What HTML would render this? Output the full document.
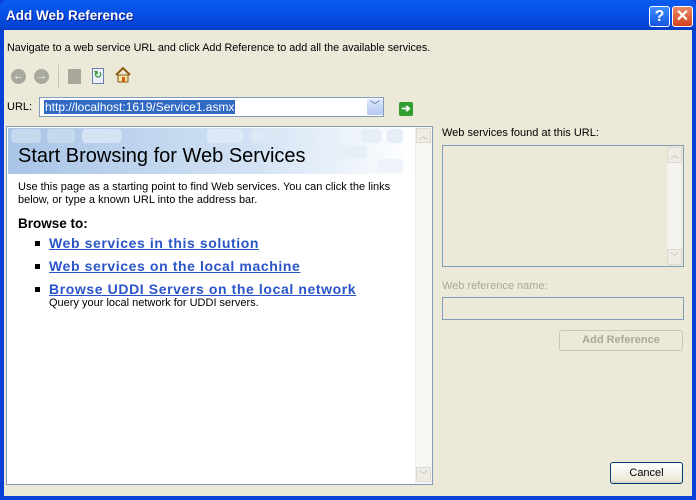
<!DOCTYPE html>
<html><head><style>
*{margin:0;padding:0;box-sizing:border-box}
body{width:696px;height:500px;overflow:hidden;background:#0a3fd8;font-family:"Liberation Sans",sans-serif;font-size:11px;position:relative}
.t{position:absolute}
#title{left:0;top:0;width:696px;height:31px;background:linear-gradient(#0a5cf0,#0750e6 40%,#0444d4 85%,#0538c0);border-radius:7px 7px 0 0}
#body{left:4px;top:30px;width:688px;height:466px;background:#ece9d8}
.btn{border:1px solid #003c74;border-radius:3px;background:linear-gradient(#fff,#ece9d8 85%,#d6d0c0);text-align:center}
.link{color:#2a55c8;font-weight:bold;text-decoration:underline;font-size:14px;letter-spacing:0.6px}
.sq{width:5px;height:5px;background:#000}
.pill{position:absolute;height:14px;border-radius:4px;background:#c6d8ee}
</style></head><body>
<div id="title" class="t"></div>
<div class="t" style="left:6px;top:8px;color:#fff;font-weight:bold;font-size:13.5px;text-shadow:1px 1px #0a1e8a">Add Web Reference</div>
<div class="t" style="left:649px;top:6px;width:21px;height:21px;border:1px solid #fff;border-radius:3px;background:linear-gradient(#3d8cff,#1553e0);color:#fff;font-weight:bold;font-size:16px;text-align:center;line-height:19px">?</div>
<div class="t" style="left:672px;top:6px;width:21px;height:21px;border:1px solid #fff;border-radius:3px;background:linear-gradient(#ea8a6a,#d2431c);color:#fff;font-weight:bold;font-size:16px;text-align:center;line-height:19px">✕</div>
<div id="body" class="t"></div>
<div class="t" style="left:7px;top:42px;font-size:10.8px">Navigate to a web service URL and click Add Reference to add all the available services.</div>
<div class="t" style="left:11px;top:69px;width:15px;height:15px;border-radius:50%;background:#a8a89c;color:#fff;font-size:11px;text-align:center;line-height:15px;font-weight:bold">←</div>
<div class="t" style="left:34px;top:69px;width:15px;height:15px;border-radius:50%;background:#a8a89c;color:#fff;font-size:11px;text-align:center;line-height:15px;font-weight:bold">→</div>
<div class="t" style="left:58px;top:65px;width:1px;height:24px;background:#c8c4b4"></div>
<div class="t" style="left:68px;top:69px;width:13px;height:15px;background:#aaa69a"></div>
<div class="t" style="left:92px;top:68px;width:12px;height:16px;background:#eef;border:1px solid #6680b0;color:#2a9a2a;font-size:10px;line-height:14px;text-align:center;font-weight:bold">↻</div>
<svg class="t" style="left:115px;top:67px" width="16" height="16"><path d="M1 8 L8 1 L15 8" fill="none" stroke="#8a5a10" stroke-width="2"/><rect x="3" y="8" width="10" height="7" fill="#f4e4a8" stroke="#8a5a10"/><rect x="7" y="10" width="3" height="5" fill="#d06010"/></svg>
<div class="t" style="left:7px;top:101px">URL:</div>
<div class="t" style="left:39px;top:97px;width:345px;height:20px;background:#fff;border:1px solid #7f9db9"></div>
<div class="t" style="left:44px;top:100px;background:#316ac5;color:#fff;padding:0 1px;line-height:14px;font-size:12px">http://localhost:1619/Service1.asmx</div>
<div class="t" style="left:367px;top:99px;width:16px;height:16px;background:linear-gradient(#dde8ff,#b5c8f2);border-radius:2px;color:#4d6185;text-align:center;font-size:10px;line-height:16px">﹀</div>
<div class="t" style="left:399px;top:102px;width:14px;height:14px;background:#2f9e2f;border-radius:2px;color:#fff;font-size:11px;text-align:center;line-height:14px;font-weight:bold">➔</div>
<div class="t" style="left:6px;top:126px;width:427px;height:359px;border:1px solid #7f9db9;background:#fff;overflow:hidden">
 <div style="position:absolute;left:1px;top:1px;width:407px;height:46px;background:linear-gradient(90deg,#a8c4e6,#d2e2f4 60%,#fff)"></div>
 <div class="pill" style="left:4px;top:2px;width:30px"></div><div class="pill" style="left:40px;top:2px;width:28px"></div>
 <div class="pill" style="left:75px;top:2px;width:40px;background:#d4e2f2"></div><div class="pill" style="left:200px;top:2px;width:36px;background:#dce8f4"></div>
 <div class="pill" style="left:244px;top:2px;width:30px;background:#dce8f4"></div><div class="pill" style="left:310px;top:2px;width:22px;background:#e6eef8"></div>
 <div class="pill" style="left:354px;top:2px;width:20px;background:#e6eef8"></div><div class="pill" style="left:380px;top:2px;width:16px;background:#e6eef8"></div>
 <div class="pill" style="left:330px;top:18px;width:30px;background:#e6eef8"></div><div class="pill" style="left:370px;top:32px;width:26px;background:#eef4fa"></div>
 <div style="position:absolute;left:11px;top:18px;font-size:20px;color:#000">Start Browsing for Web Services</div>
 <div style="position:absolute;left:408px;top:0;width:17px;height:357px;background:#f6f6f2;border-left:1px solid #eee"></div>
 <div style="position:absolute;left:409px;top:1px;width:15px;height:15px;border:1px solid #dcdad0;background:#eeece4;color:#bbb;font-size:9px;text-align:center">︿</div>
 <div style="position:absolute;left:409px;top:340px;width:15px;height:15px;border:1px solid #dcdad0;background:#eeece4;color:#bbb;font-size:9px;text-align:center">﹀</div>
 <div style="position:absolute;left:11px;top:54px;width:380px;line-height:13px">Use this page as a starting point to find Web services. You can click the links below, or type a known URL into the address bar.</div>
 <div style="position:absolute;left:11px;top:89px;font-weight:bold;font-size:13.5px">Browse to:</div>
 <div class="sq" style="position:absolute;left:28px;top:114px"></div><div class="link" style="position:absolute;left:42px;top:108px">Web services in this solution</div>
 <div class="sq" style="position:absolute;left:28px;top:137px"></div><div class="link" style="position:absolute;left:42px;top:131px">Web services on the local machine</div>
 <div class="sq" style="position:absolute;left:28px;top:160px"></div><div class="link" style="position:absolute;left:42px;top:154px">Browse UDDI Servers on the local network</div>
 <div style="position:absolute;left:42px;top:170px">Query your local network for UDDI servers.</div>
</div>
<div class="t" style="left:442px;top:127px">Web services found at this URL:</div>
<div class="t" style="left:442px;top:145px;width:242px;height:122px;border:1px solid #7f9db9;background:#ece9d8"></div>
<div class="t" style="left:667px;top:147px;width:15px;height:118px;background:#f4f3ee"></div>
<div class="t" style="left:667px;top:147px;width:15px;height:16px;border:1px solid #dcdad0;background:#eeece4;color:#bbb;font-size:9px;text-align:center">︿</div>
<div class="t" style="left:667px;top:249px;width:15px;height:16px;border:1px solid #dcdad0;background:#eeece4;color:#bbb;font-size:9px;text-align:center">﹀</div>
<div class="t" style="left:442px;top:280px;color:#aca899">Web reference name:</div>
<div class="t" style="left:442px;top:297px;width:242px;height:23px;border:1px solid #7f9db9"></div>
<div class="t" style="left:559px;top:330px;width:124px;height:21px;border:1px solid #c9c7ba;border-radius:3px;color:#aca899;font-weight:bold;text-align:center;line-height:19px">Add Reference</div>
<div class="t btn" style="left:610px;top:462px;width:73px;height:22px;line-height:20px">Cancel</div>
</body></html>
